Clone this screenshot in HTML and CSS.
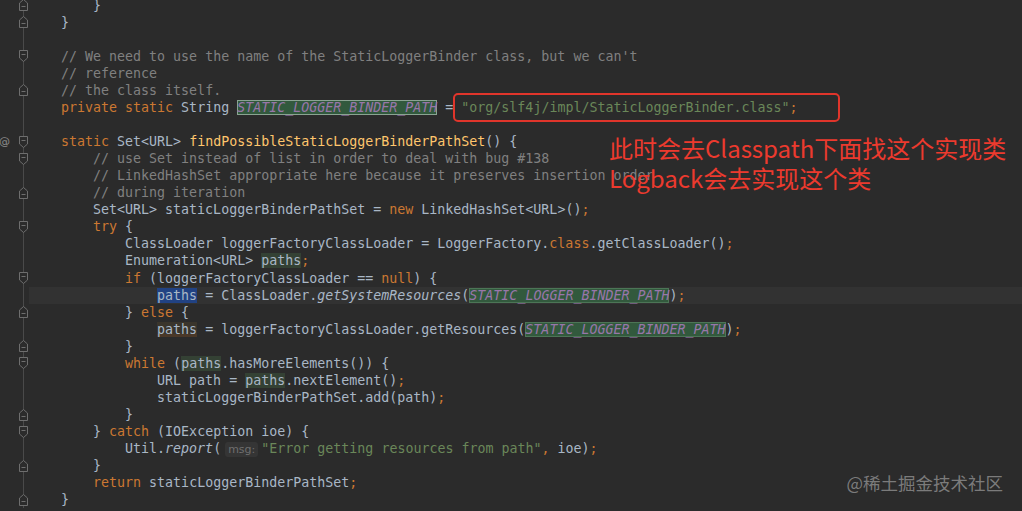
FILE: index.html
```html
<!DOCTYPE html>
<html lang="zh-CN">
<head>
    <meta charset="UTF-8">
    <title>StaticLoggerBinder</title>
    <link rel="stylesheet" href="styles.css">
</head>
<body>
    <div class="page">
        <div class="editor">
            <div class="row"><div class="gut"><span></span><svg class="fold" viewBox="0 0 9 12"><path d="M0.5 11.5H8.5V4L4.5 0.5L0.5 4Z"/><path d="M2.5 7.5H6.5"/></svg></div><pre class="src">        }</pre></div>
            <div class="row"><div class="gut"><span></span><svg class="fold" viewBox="0 0 9 12"><path d="M0.5 11.5H8.5V4L4.5 0.5L0.5 4Z"/><path d="M2.5 7.5H6.5"/></svg></div><pre class="src">    }</pre></div>
            <div class="row"><div class="gut"></div><pre class="src"> </pre></div>
            <div class="row"><div class="gut"><span></span><svg class="fold" viewBox="0 0 9 12"><path d="M0.5 0.5H8.5V8L4.5 11.5L0.5 8Z"/><path d="M2.5 4.5H6.5"/></svg></div><pre class="src">    <span class="c">// We need to use the name of the StaticLoggerBinder class, but we can't</span></pre></div>
            <div class="row"><div class="gut"></div><pre class="src">    <span class="c">// reference</span></pre></div>
            <div class="row"><div class="gut"><span></span><svg class="fold" viewBox="0 0 9 12"><path d="M0.5 11.5H8.5V4L4.5 0.5L0.5 4Z"/><path d="M2.5 7.5H6.5"/></svg></div><pre class="src">    <span class="c">// the class itself.</span></pre></div>
            <div class="row"><div class="gut"></div><pre class="src">    <span class="k">private static</span> String <span class="cn hl box">STATIC_LOGGER_BINDER_PATH</span> = <span class="s">"org/slf4j/impl/StaticLoggerBinder.class"</span><span class="k">;</span></pre></div>
            <div class="row"><div class="gut"></div><pre class="src"> </pre></div>
            <div class="row"><div class="gut"><span class="at">@</span><svg class="fold" viewBox="0 0 9 12"><path d="M0.5 0.5H8.5V8L4.5 11.5L0.5 8Z"/><path d="M2.5 4.5H6.5"/></svg></div><pre class="src">    <span class="k">static</span> Set&lt;URL&gt; <span class="f">findPossibleStaticLoggerBinderPathSet</span>() {</pre></div>
            <div class="row"><div class="gut"><span></span><svg class="fold" viewBox="0 0 9 12"><path d="M0.5 0.5H8.5V8L4.5 11.5L0.5 8Z"/><path d="M2.5 4.5H6.5"/></svg></div><pre class="src">        <span class="c">// use Set instead of list in order to deal with bug #138</span></pre></div>
            <div class="row"><div class="gut"></div><pre class="src">        <span class="c">// LinkedHashSet appropriate here because it preserves insertion order</span></pre></div>
            <div class="row"><div class="gut"><span></span><svg class="fold" viewBox="0 0 9 12"><path d="M0.5 11.5H8.5V4L4.5 0.5L0.5 4Z"/><path d="M2.5 7.5H6.5"/></svg></div><pre class="src">        <span class="c">// during iteration</span></pre></div>
            <div class="row"><div class="gut"></div><pre class="src">        Set&lt;URL&gt; staticLoggerBinderPathSet = <span class="k">new</span> LinkedHashSet&lt;URL&gt;()<span class="k">;</span></pre></div>
            <div class="row"><div class="gut"><span></span><svg class="fold" viewBox="0 0 9 12"><path d="M0.5 0.5H8.5V8L4.5 11.5L0.5 8Z"/><path d="M2.5 4.5H6.5"/></svg></div><pre class="src">        <span class="k">try</span> {</pre></div>
            <div class="row"><div class="gut"></div><pre class="src">            ClassLoader loggerFactoryClassLoader = LoggerFactory.<span class="k">class</span>.getClassLoader()<span class="k">;</span></pre></div>
            <div class="row"><div class="gut"></div><pre class="src">            Enumeration&lt;URL&gt; <span class="rd">paths</span><span class="k">;</span></pre></div>
            <div class="row"><div class="gut"><span></span><svg class="fold" viewBox="0 0 9 12"><path d="M0.5 0.5H8.5V8L4.5 11.5L0.5 8Z"/><path d="M2.5 4.5H6.5"/></svg></div><pre class="src">            <span class="k">if</span> (loggerFactoryClassLoader == <span class="k">null</span>) {</pre></div>
            <div class="row current"><div class="gut"></div><pre class="src">                <span class="sel">paths</span> = ClassLoader.<span class="i">getSystemResources</span>(<span class="cn hl">STATIC_LOGGER_BINDER_PATH</span>)<span class="k">;</span></pre></div>
            <div class="row"><div class="gut"><span></span><svg class="fold" viewBox="0 0 9 12"><path d="M0.5 11.5H8.5V4L4.5 0.5L0.5 4Z"/><path d="M2.5 7.5H6.5"/></svg></div><pre class="src">            } <span class="k">else</span> {</pre></div>
            <div class="row"><div class="gut"></div><pre class="src">                <span class="wr">paths</span> = loggerFactoryClassLoader.getResources(<span class="cn hl">STATIC_LOGGER_BINDER_PATH</span>)<span class="k">;</span></pre></div>
            <div class="row"><div class="gut"><span></span><svg class="fold" viewBox="0 0 9 12"><path d="M0.5 11.5H8.5V4L4.5 0.5L0.5 4Z"/><path d="M2.5 7.5H6.5"/></svg></div><pre class="src">            }</pre></div>
            <div class="row"><div class="gut"><span></span><svg class="fold" viewBox="0 0 9 12"><path d="M0.5 0.5H8.5V8L4.5 11.5L0.5 8Z"/><path d="M2.5 4.5H6.5"/></svg></div><pre class="src">            <span class="k">while</span> (<span class="rd">paths</span>.hasMoreElements()) {</pre></div>
            <div class="row"><div class="gut"></div><pre class="src">                URL path = <span class="rd">paths</span>.nextElement()<span class="k">;</span></pre></div>
            <div class="row"><div class="gut"></div><pre class="src">                staticLoggerBinderPathSet.add(path)<span class="k">;</span></pre></div>
            <div class="row"><div class="gut"><span></span><svg class="fold" viewBox="0 0 9 12"><path d="M0.5 11.5H8.5V4L4.5 0.5L0.5 4Z"/><path d="M2.5 7.5H6.5"/></svg></div><pre class="src">            }</pre></div>
            <div class="row"><div class="gut"><span></span><svg class="fold" viewBox="0 0 9 12"><path d="M0.5 0.5H8.5V8L4.5 11.5L0.5 8Z"/><path d="M2.5 4.5H6.5"/></svg></div><pre class="src">        } <span class="k">catch</span> (IOException ioe) {</pre></div>
            <div class="row"><div class="gut"></div><pre class="src">            Util.<span class="i">report</span>(<span class="hint">msg:</span><span class="s">"Error getting resources from path"</span><span class="k">,</span> ioe)<span class="k">;</span></pre></div>
            <div class="row"><div class="gut"><span></span><svg class="fold" viewBox="0 0 9 12"><path d="M0.5 11.5H8.5V4L4.5 0.5L0.5 4Z"/><path d="M2.5 7.5H6.5"/></svg></div><pre class="src">        }</pre></div>
            <div class="row"><div class="gut"></div><pre class="src">        <span class="k">return</span> staticLoggerBinderPathSet<span class="k">;</span></pre></div>
            <div class="row"><div class="gut"><span></span><svg class="fold" viewBox="0 0 9 12"><path d="M0.5 11.5H8.5V4L4.5 0.5L0.5 4Z"/><path d="M2.5 7.5H6.5"/></svg></div><pre class="src">    }</pre></div>
        </div>

        <div class="mark-box"></div>
        <div class="note">
            <div>此时会去Classpath下面找这个实现类</div>
            <div>Logback会去实现这个类</div>
        </div>
        <div class="watermark">@稀土掘金技术社区</div>
    </div>
</body>
</html>
```

FILE: styles.css
```css
body {
    margin: 0;
    background: #2b2b2b;
    overflow: hidden;
}

.page {
    position: relative;
    width: 1022px;
    height: 511px;
    overflow: hidden;
    background: #2b2b2b;
}

.editor {
    margin-top: -3.5px;
}

.row {
    display: flex;
    height: 17.07px;
}

.gut {
    width: 29px;
    flex: none;
    display: grid;
    grid-template-columns: 18px 11px;
    align-items: center;
    background: linear-gradient(#4a4a4a, #4a4a4a) 23px 0 / 1px 100% no-repeat;
}

.at {
    color: #8c8c8c;
    font-family: "DejaVu Sans", sans-serif;
    font-size: 11px;
    margin-left: -1px;
}

.fold {
    width: 9px;
    height: 12px;
    margin-left: 1px;
    fill: #2b2b2b;
    stroke: #6e6e6e;
    stroke-width: 1;
}

.src {
    flex: 1;
    margin: 0;
    font-family: "DejaVu Sans Mono", monospace;
    font-size: 13.3px;
    line-height: 17.07px;
    color: #a9b7c6;
    white-space: pre;
}

.current .src {
    background: #323232;
}

.k { color: #cc7832; }
.c { color: #808080; }
.s { color: #6a8759; }
.f { color: #ffc66d; }
.i { font-style: italic; }

.cn {
    color: #9876aa;
    font-style: italic;
}

.hl {
    background: #32593d;
    box-shadow: inset 0 0 0 1px #4c7556;
}

.box {
    box-shadow: inset 0 0 0 1px #8aa392;
}

.rd { background: #344134; }
.sel { background: #214283; }

.wr {
    background: #3a352c;
    box-shadow: inset 0 -3px 0 #4a3828;
}

.hint {
    display: inline-block;
    margin: 0 3px 0 4px;
    padding: 0 3px;
    border-radius: 3px;
    background: #353535;
    color: #6f6f6f;
    font-family: "DejaVu Sans", sans-serif;
    font-size: 11px;
    line-height: 15px;
}

.mark-box {
    position: absolute;
    left: 453px;
    top: 93px;
    width: 383px;
    height: 25px;
    border: 2px solid #e0352b;
    border-radius: 5px;
}

.note {
    position: absolute;
    left: 609px;
    top: 133px;
    color: #ec3a2e;
    font-family: "Noto Sans CJK SC", "Noto Sans", sans-serif;
    font-size: 24px;
    line-height: 30px;
}

.watermark {
    position: absolute;
    right: 19px;
    top: 471px;
    color: rgba(160, 160, 160, 0.7);
    font-family: "Noto Sans CJK SC", sans-serif;
    font-size: 17.5px;
    line-height: 24px;
}
```
